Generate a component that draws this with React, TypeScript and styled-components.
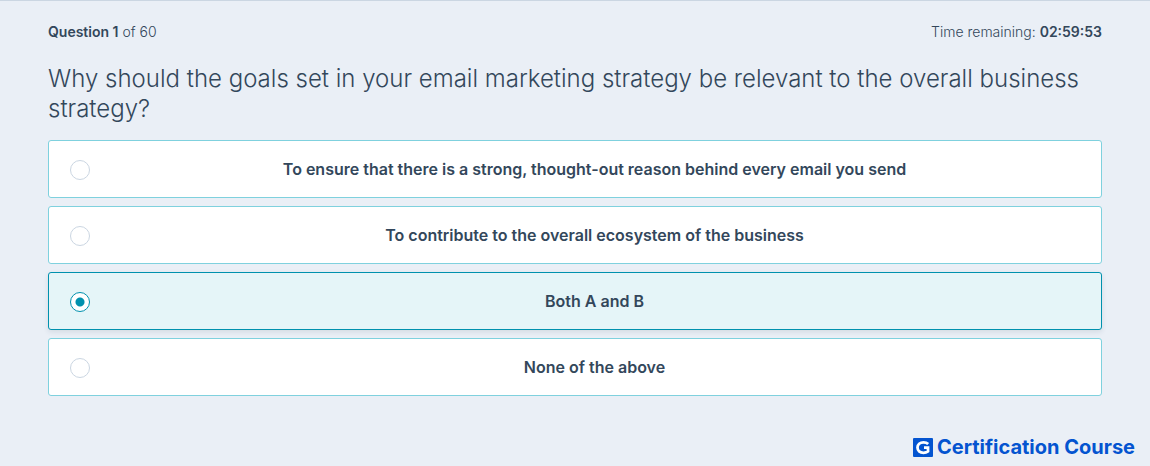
import React, { useState } from "react";
import styled, { createGlobalStyle } from "styled-components";

const GlobalStyle = createGlobalStyle`
  *, *::before, *::after { box-sizing: border-box; }
  body {
    margin: 0;
    background: #eaeff6;
    color: #33475b;
    font-family: Inter, "Open Sans", sans-serif;
    font-size: 14px;
    font-weight: 300;
    line-height: 24px;
  }
`;

const Page = styled.div`
  display: flex;
  flex-direction: column;
  min-height: 100vh;
  border-top: 1px solid #cbd6e2;
`;

const Quiz = styled.main`
  flex: 1;
  padding: 19px 48px 16px;
`;

const StatusBar = styled.header`
  display: flex;
  justify-content: space-between;
`;

const Strong = styled.strong`
  font-weight: 600;
`;

const Question = styled.fieldset`
  min-width: 0;
  margin: 20px 0 0;
  padding: 0;
  border: 0;
`;

const Prompt = styled.legend`
  padding: 0;
  margin-bottom: 16px;
  font-size: 24px;
  line-height: 30px;
`;

const AnswerList = styled.div`
  display: grid;
  gap: 8px;
`;

const Answer = styled.label<{ $selected: boolean }>`
  display: flex;
  align-items: center;
  min-height: 58px;
  padding: 8px 2px 8px 21px;
  border: 1px solid ${({ $selected }) => ($selected ? "#0091ae" : "#7fd1de")};
  border-radius: 3px;
  background: ${({ $selected }) => ($selected ? "#e5f5f8" : "#ffffff")};
  box-shadow: ${({ $selected }) => ($selected ? "0 2px 5px rgba(51, 71, 91, 0.12)" : "none")};
  cursor: pointer;
`;

const Radio = styled.input`
  appearance: none;
  flex: none;
  width: 20px;
  height: 20px;
  margin: 2px 0 0;
  border: 1px solid #cbd6e2;
  border-radius: 50%;
  background: #ffffff;

  &:checked {
    border-color: #0091ae;
    background: radial-gradient(circle, #0091ae 4px, #ffffff 5px);
  }
`;

const AnswerText = styled.span`
  flex: 1;
  font-size: 16px;
  font-weight: 600;
  text-align: center;
`;

const Footer = styled.footer`
  display: flex;
  justify-content: flex-end;
  padding: 0 15px 7px;
`;

const Brand = styled.a`
  display: flex;
  align-items: center;
  gap: 4px;
  color: #0454d0;
  font-size: 20px;
  font-weight: 700;
  text-decoration: none;
`;

const answers = [
  "To ensure that there is a strong, thought-out reason behind every email you send",
  "To contribute to the overall ecosystem of the business",
  "Both A and B",
  "None of the above",
];

function BrandMark() {
  return (
    <svg width="20" height="19" viewBox="0 0 20 19" aria-hidden="true">
      <rect width="20" height="19" rx="1" fill="#0454d0" />
      <path
        d="M15.2 6.1C14 4.9 12.4 4.3 10.5 4.3C7 4.3 4.5 6.5 4.5 9.6C4.5 12.7 7 14.8 10.5 14.8C12.2 14.8 13.8 14.3 15 13.4V9.7H11"
        fill="none"
        stroke="#ffffff"
        strokeWidth="2.8"
      />
    </svg>
  );
}

export default function App() {
  const [selected, setSelected] = useState(2);

  return (
    <>
      <GlobalStyle />
      <Page>
        <Quiz>
          <StatusBar>
            <span>
              <Strong>Question 1</Strong> of 60
            </span>
            <span>
              Time remaining: <Strong>02:59:53</Strong>
            </span>
          </StatusBar>
          <Question>
            <Prompt>
              Why should the goals set in your email marketing strategy be relevant to the overall
              business strategy?
            </Prompt>
            <AnswerList>
              {answers.map((text, index) => (
                <Answer key={text} $selected={index === selected}>
                  <Radio
                    type="radio"
                    name="answer"
                    checked={index === selected}
                    onChange={() => setSelected(index)}
                  />
                  <AnswerText>{text}</AnswerText>
                </Answer>
              ))}
            </AnswerList>
          </Question>
        </Quiz>
        <Footer>
          <Brand href="#">
            <BrandMark />
            Certification Course
          </Brand>
        </Footer>
      </Page>
    </>
  );
}
